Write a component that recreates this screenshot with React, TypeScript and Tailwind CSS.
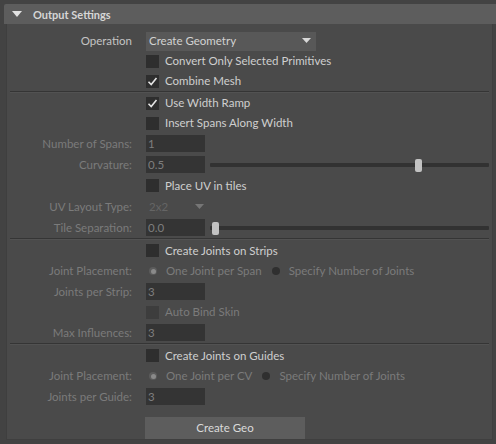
import React from "react";

const on = "text-[#cfcfcf]";
const off = "text-[#7b7b7b]";

const Row = ({
  label,
  dim,
  h = "h-[20px]",
  children,
}: {
  label?: string;
  dim?: boolean;
  h?: string;
  children?: React.ReactNode;
}) => {
  return (
    <div className={`flex items-center ${h}`}>
      <div
        className={`w-[125px] shrink-0 text-right ${dim ? off : "text-[#c4c4c4]"}`}
      >
        {label}
      </div>
      <div className="flex items-center pl-[14px] flex-1 min-w-0">{children}</div>
    </div>
  );
};

const Check = ({
  label,
  checked,
  dim,
}: {
  label: string;
  checked?: boolean;
  dim?: boolean;
}) => {
  return (
    <div className="flex items-center gap-[6px]">
      <div
        className={`w-[13px] h-[13px] flex items-center justify-center ${
          dim ? "bg-[#3d3d3d]" : "bg-[#2e2e2e]"
        }`}
      >
        {checked && (
          <svg width="11" height="11" viewBox="0 0 11 11">
            <path
              d="M1.5 5.8 L4.2 8.5 L9.5 2"
              fill="none"
              stroke="#e4e4e4"
              strokeWidth="1.6"
            />
          </svg>
        )}
      </div>
      <span className={dim ? off : on}>{label}</span>
    </div>
  );
};

const Field = ({ value }: { value: string }) => {
  return (
    <div className="w-[59px] h-[17px] bg-[#343434] text-[#7e7e7e] pl-[2px] flex items-center">
      {value}
    </div>
  );
};

const Slider = ({ pos }: { pos: number }) => {
  return (
    <div className="relative flex-1 h-[14px] ml-[5px] mr-[3px] flex items-center">
      <div className="w-full h-[4px] bg-[#323232] rounded-[1px]" />
      <div
        className="absolute top-[1px] w-[7px] h-[13px] bg-[#c2c2c2] rounded-[2px]"
        style={{ left: pos }}
      />
    </div>
  );
};

const Radio = ({ label, selected }: { label: string; selected?: boolean }) => {
  return (
    <div className="flex items-center gap-[9px]">
      <div
        className={`w-[8px] h-[8px] rounded-full flex items-center justify-center ${
          selected ? "bg-[#5c5c5c]" : "bg-[#2f2f2f]"
        }`}
      >
        {selected && <div className="w-[5px] h-[5px] rounded-full bg-[#8a8a8a]" />}
      </div>
      <span className={off}>{label}</span>
    </div>
  );
};

const Sep = () => (
  <div className="h-[2px] mx-[3px] border-t border-[#353535] border-b border-b-[#525252]" />
);

export default function App() {
  return (
    <div
      className="w-[496px] h-[444px] bg-[#434343] pt-[4px] pl-[4px] overflow-hidden text-[11.5px] leading-none"
      style={{ fontFamily: "Lato, 'Open Sans', sans-serif" }}
    >
      <div className="h-[20px] bg-[#5d5d5d] rounded-tl-[2px] flex items-center pl-[8px]">
        <svg width="10" height="7" viewBox="0 0 10 7">
          <path d="M0 0 H10 L5 6 Z" fill="#e2e2e2" />
        </svg>
        <span className="ml-[11px] font-bold text-[11px] text-[#d6d6d6]">Output Settings</span>
      </div>
      <div className="ml-[2px] mr-[3px] h-[416px] bg-[#4a4a4a] border-l border-r border-[#3f3f3f] border-b pt-[7px]">
        <Row label="Operation">
          <div className="w-[170px] h-[19px] bg-[#585858] flex items-center justify-between pl-[3px] pr-[5px] text-[#d2d2d2]">
            <span>Create Geometry</span>
            <svg width="9" height="6" viewBox="0 0 9 6">
              <path d="M0 0 H9 L4.5 5 Z" fill="#d8d8d8" />
            </svg>
          </div>
        </Row>
        <Row>
          <Check label="Convert Only Selected Primitives" />
        </Row>
        <Row>
          <Check label="Combine Mesh" checked />
        </Row>
        <Sep />
        <Row>
          <Check label="Use Width Ramp" checked />
        </Row>
        <Row>
          <Check label="Insert Spans Along Width" />
        </Row>
        <Row label="Number of Spans:" dim h="h-[21px]">
          <Field value="1" />
        </Row>
        <Row label="Curvature:" dim h="h-[21px]">
          <Field value="0.5" />
          <Slider pos={205} />
        </Row>
        <Row h="h-[21px]">
          <Check label="Place UV in tiles" />
        </Row>
        <Row label="UV Layout Type:" dim h="h-[21px]">
          <div className="w-[60px] flex items-center justify-between pl-[3px] pr-[2px] text-[#656565]">
            <span>2x2</span>
            <svg width="9" height="6" viewBox="0 0 9 6">
              <path d="M0 0 H9 L4.5 5 Z" fill="#767676" />
            </svg>
          </div>
        </Row>
        <Row label="Tile Separation:" dim h="h-[21px]">
          <Field value="0.0" />
          <Slider pos={2} />
        </Row>
        <Sep />
        <Row h="h-[21px]">
          <Check label="Create Joints on Strips" />
        </Row>
        <Row label="Joint Placement:" dim>
          <div className="flex items-center gap-[10px] pl-[3px]">
            <Radio label="One Joint per Span" selected />
            <Radio label="Specify Number of Joints" />
          </div>
        </Row>
        <Row label="Joints per Strip:" dim h="h-[21px]">
          <Field value="3" />
        </Row>
        <Row>
          <Check label="Auto Bind Skin" dim />
        </Row>
        <Row label="Max Influences:" dim h="h-[21px]">
          <Field value="3" />
        </Row>
        <Sep />
        <Row h="h-[21px]">
          <Check label="Create Joints on Guides" />
        </Row>
        <Row label="Joint Placement:" dim>
          <div className="flex items-center gap-[10px] pl-[3px]">
            <Radio label="One Joint per CV" selected />
            <Radio label="Specify Number of Joints" />
          </div>
        </Row>
        <Row label="Joints per Guide:" dim h="h-[21px]">
          <Field value="3" />
        </Row>
        <div className="flex pl-[138px] mt-[10px]">
          <div className="w-[160px] h-[22px] bg-[#5d5d5d] flex items-center justify-center text-[#dadada]">
            Create Geo
          </div>
        </div>
      </div>
    </div>
  );
}
